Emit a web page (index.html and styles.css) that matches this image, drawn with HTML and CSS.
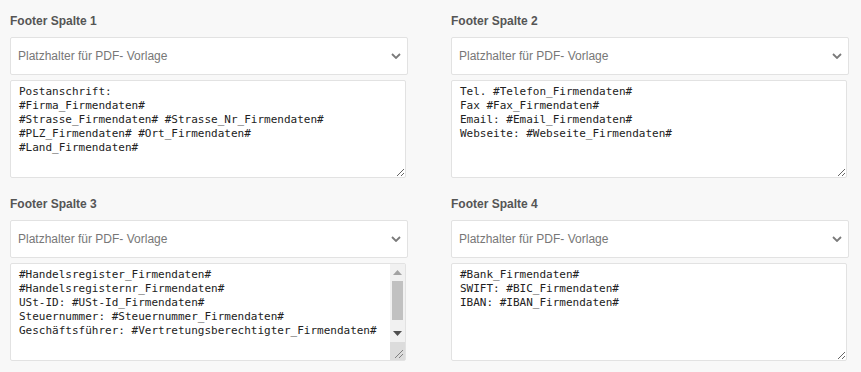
FILE: index.html
```html
<!DOCTYPE html>
<html lang="de">
<head>
    <meta charset="UTF-8">
    <meta name="viewport" content="width=device-width, initial-scale=1.0">
    <title>Footer Einstellungen</title>
    <link rel="stylesheet" href="styles.css">
</head>
<body>
<div class="footer-grid">
    <div class="footer-col">
        <label class="footer-label" for="footer-1">Footer Spalte 1</label>
        <div class="select-wrap">
            <select class="placeholder-select">
                <option>Platzhalter für PDF- Vorlage</option>
            </select>
            <svg class="chevron" width="10" height="6" viewBox="0 0 10 6"><path d="M1 1l4 4 4-4" fill="none" stroke="#7a7a7a" stroke-width="1.8"/></svg>
        </div>
        <textarea id="footer-1" class="footer-text">Postanschrift:
#Firma_Firmendaten#
#Strasse_Firmendaten# #Strasse_Nr_Firmendaten#
#PLZ_Firmendaten# #Ort_Firmendaten#
#Land_Firmendaten#</textarea>
    </div>

    <div class="footer-col">
        <label class="footer-label" for="footer-2">Footer Spalte 2</label>
        <div class="select-wrap">
            <select class="placeholder-select">
                <option>Platzhalter für PDF- Vorlage</option>
            </select>
            <svg class="chevron" width="10" height="6" viewBox="0 0 10 6"><path d="M1 1l4 4 4-4" fill="none" stroke="#7a7a7a" stroke-width="1.8"/></svg>
        </div>
        <textarea id="footer-2" class="footer-text">Tel. #Telefon_Firmendaten#
Fax #Fax_Firmendaten#
Email: #Email_Firmendaten#
Webseite: #Webseite_Firmendaten#</textarea>
    </div>

    <div class="footer-col">
        <label class="footer-label" for="footer-3">Footer Spalte 3</label>
        <div class="select-wrap">
            <select class="placeholder-select">
                <option>Platzhalter für PDF- Vorlage</option>
            </select>
            <svg class="chevron" width="10" height="6" viewBox="0 0 10 6"><path d="M1 1l4 4 4-4" fill="none" stroke="#7a7a7a" stroke-width="1.8"/></svg>
        </div>
        <div class="text-wrap">
            <textarea id="footer-3" class="footer-text">#Handelsregister_Firmendaten#
#Handelsregisternr_Firmendaten#
USt-ID: #USt-Id_Firmendaten#
Steuernummer: #Steuernummer_Firmendaten#
Geschäftsführer: #Vertretungsberechtigter_Firmendaten#</textarea>
            <div class="fake-scrollbar">
                <div class="scroll-btn">
                    <svg width="9" height="5" viewBox="0 0 9 5"><path d="M0 5L4.5 0 9 5z" fill="#a3a3a3"/></svg>
                </div>
                <div class="scroll-track"><div class="scroll-thumb"></div></div>
                <div class="scroll-btn">
                    <svg width="9" height="5" viewBox="0 0 9 5"><path d="M0 0h9L4.5 5z" fill="#505050"/></svg>
                </div>
                <div class="scroll-corner">
                    <svg width="9" height="9" viewBox="0 0 9 9"><path d="M9 1L1 9M9 5L5 9" stroke="#808080" stroke-width="1"/></svg>
                </div>
            </div>
        </div>
    </div>

    <div class="footer-col">
        <label class="footer-label" for="footer-4">Footer Spalte 4</label>
        <div class="select-wrap">
            <select class="placeholder-select">
                <option>Platzhalter für PDF- Vorlage</option>
            </select>
            <svg class="chevron" width="10" height="6" viewBox="0 0 10 6"><path d="M1 1l4 4 4-4" fill="none" stroke="#7a7a7a" stroke-width="1.8"/></svg>
        </div>
        <textarea id="footer-4" class="footer-text">#Bank_Firmendaten#
SWIFT: #BIC_Firmendaten#
IBAN: #IBAN_Firmendaten#</textarea>
    </div>
</div>
</body>
</html>
```

FILE: styles.css
```css
body {
    margin: 0;
    background-color: #f8f8f8;
    font-family: "Liberation Sans", Arial, sans-serif;
}

.footer-grid {
    display: grid;
    grid-template-columns: 398px 398px;
    column-gap: 43px;
    row-gap: 18px;
    padding: 13px 0 0 10px;
}

.footer-col {
    display: flex;
    flex-direction: column;
}

.footer-label {
    font-size: 12px;
    font-weight: bold;
    line-height: 16px;
    color: #555;
    margin-bottom: 8px;
}

.select-wrap {
    position: relative;
    margin-bottom: 5px;
}

.placeholder-select {
    appearance: none;
    -webkit-appearance: none;
    display: block;
    width: 100%;
    height: 38px;
    padding: 0 30px 0 7px;
    font-family: "Liberation Sans", Arial, sans-serif;
    font-size: 12px;
    color: #777;
    background-color: #fff;
    border: 1px solid #e2e2e2;
    border-radius: 2px;
    outline: none;
}

.chevron {
    position: absolute;
    right: 7px;
    top: 16px;
    pointer-events: none;
}

.footer-text {
    display: block;
    box-sizing: border-box;
    width: 396px;
    height: 98px;
    margin: 0;
    padding: 4px 8px;
    font-family: "DejaVu Sans Mono", Consolas, monospace;
    font-size: 11px;
    line-height: 14px;
    color: #222;
    background-color: #fff;
    border: 1px solid #e2e2e2;
    border-radius: 2px;
    outline: none;
}

.text-wrap {
    position: relative;
    width: 396px;
}

/* drawn scrollbar, the screenshot browser hides the native one */
.fake-scrollbar {
    position: absolute;
    top: 1px;
    right: 1px;
    bottom: 1px;
    width: 15px;
    display: flex;
    flex-direction: column;
    background-color: #f1f1f1;
}

.scroll-btn {
    height: 17px;
    display: flex;
    align-items: center;
    justify-content: center;
}

.scroll-track {
    flex: 1;
    padding: 0 2px;
}

.scroll-thumb {
    height: 39px;
    background-color: #c1c1c1;
}

.scroll-corner {
    height: 16px;
    background-color: #dcdcdc;
    display: flex;
    align-items: flex-end;
    justify-content: flex-end;
    padding: 0 2px 2px 0;
}
```
